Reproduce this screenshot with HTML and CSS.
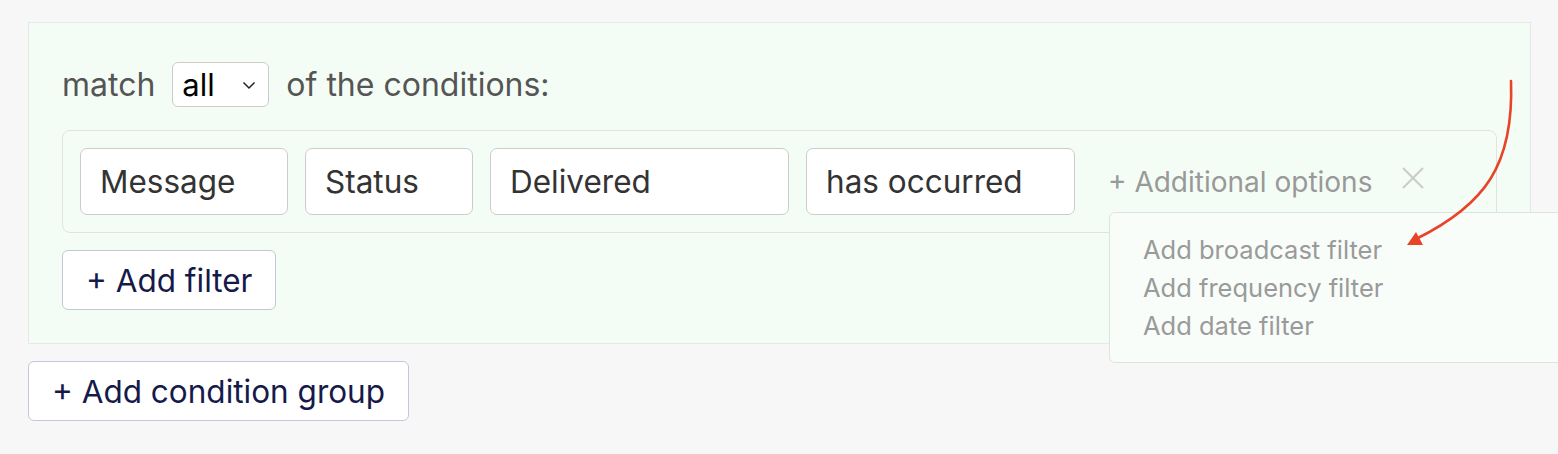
FILE: index.html
```html
<!DOCTYPE html>
<html lang="en">
<head>
<meta charset="utf-8">
<title>Conditions</title>
<link rel="stylesheet" href="styles.css">
</head>
<body>
<div class="page">
  <section class="group">
    <div class="match-line">
      <span class="label">match</span>
      <span class="select">all
        <svg class="chev" width="14" height="9" viewBox="0 0 14 9"><path d="M1.5 1.5 L7 7 L12.5 1.5" fill="none" stroke="#222" stroke-width="1.5"/></svg>
      </span>
      <span class="label">of the conditions:</span>
    </div>
    <div class="row">
      <div class="field w-message">Message</div>
      <div class="field w-status">Status</div>
      <div class="field w-delivered">Delivered</div>
      <div class="field w-occurred">has occurred</div>
      <span class="more">+ Additional options</span>
      <svg class="close" width="22" height="22" viewBox="0 0 22 22"><path d="M1 1 L21 21 M21 1 L1 21" stroke="#cccccc" stroke-width="2.2" fill="none"/></svg>
    </div>
    <button class="btn">+ Add filter</button>
  </section>
  <button class="btn">+ Add condition group</button>

  <div class="menu">
    <div class="item">Add broadcast filter</div>
    <div class="item">Add frequency filter</div>
    <div class="item">Add date filter</div>
  </div>

  <svg class="arrow" width="1558" height="454" viewBox="0 0 1558 454">
    <path d="M1511 81 C1514 165 1485 205 1416 239" fill="none" stroke="#e8442a" stroke-width="2.6" stroke-linecap="round"/>
    <polygon points="1407,245 1416,232 1423,245" fill="#e8442a"/>
  </svg>
</div>
</body>
</html>
```

FILE: styles.css
```css
html, body {
  margin: 0;
  padding: 0;
  overflow: hidden;
  background: #f7f7f7;
  font-family: Inter, "Noto Sans", sans-serif;
}
.page {
  position: relative;
  width: 1558px;
  height: 454px;
  padding: 22px 0 0 28px;
  box-sizing: border-box;
}
.group {
  width: 1503px;
  box-sizing: border-box;
  background: #f4fdf5;
  border: 1px solid #e6e8e6;
  padding: 39px 33px 33px 33px;
  margin-bottom: 17px;
}
.match-line {
  display: flex;
  align-items: center;
  gap: 17px;
  height: 45px;
  margin-bottom: 23px;
}
.label {
  font-size: 32px;
  color: #555555;
  letter-spacing: 0;
}
.select {
  box-sizing: border-box;
  width: 97px;
  height: 45px;
  border: 1px solid #cccccc;
  border-radius: 6px;
  background: #ffffff;
  display: flex;
  align-items: center;
  justify-content: space-between;
  padding: 0 12px 0 9px;
  font-size: 31px;
  color: #000;
}
.chev { margin-top: 2px; }
.row {
  display: flex;
  align-items: center;
  gap: 17px;
  border: 1px solid #dfe4df;
  border-radius: 8px;
  padding: 17px;
  margin-bottom: 17px;
}
.field {
  box-sizing: border-box;
  height: 67px;
  border: 1px solid #cccccc;
  border-radius: 7px;
  background: #ffffff;
  display: flex;
  align-items: center;
  padding: 0 19px;
  font-size: 31.5px;
  color: #333333;
}
.w-message { width: 208px; }
.w-status { width: 168px; }
.w-delivered { width: 299px; }
.w-occurred { width: 269px; }
.more {
  margin-left: 16px;
  font-size: 28px;
  color: #999999;
}
.close {
  margin-left: 13px;
  margin-top: -8px;
}
.btn {
  display: block;
  box-sizing: border-box;
  height: 60px;
  padding: 0 23px;
  border: 1px solid #c4c6dd;
  border-radius: 6px;
  background: #ffffff;
  font-family: Inter, "Noto Sans", sans-serif;
  font-size: 31.5px;
  color: #161a4a;
}
.menu {
  position: absolute;
  left: 1109px;
  top: 212px;
  width: 480px;
  box-sizing: border-box;
  padding: 18px 0 17px 33px;
  background: #f9fdf9;
  border: 1px solid #dfe3df;
  border-radius: 6px;
}
.item {
  font-size: 25.5px;
  line-height: 38px;
  color: #9a9a9a;
}
.arrow {
  position: absolute;
  left: 0;
  top: 0;
  pointer-events: none;
}
```
